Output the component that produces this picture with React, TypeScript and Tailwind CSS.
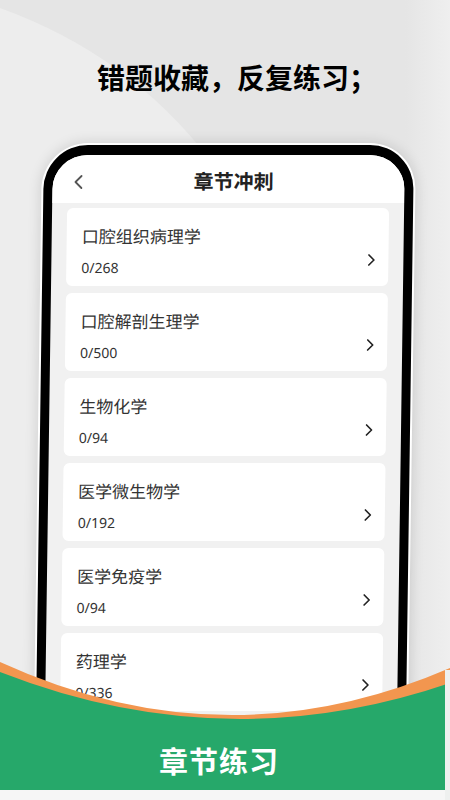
import { ChevronLeft, ChevronRight } from "lucide-react";

const chapters = [
  { name: "口腔组织病理学", done: 0, total: 268 },
  { name: "口腔解剖生理学", done: 0, total: 500 },
  { name: "生物化学", done: 0, total: 94 },
  { name: "医学微生物学", done: 0, total: 192 },
  { name: "医学免疫学", done: 0, total: 94 },
  { name: "药理学", done: 0, total: 336 },
  { name: "病理学", done: 0, total: 410 },
];

function Backdrop() {
  return (
    <svg className="absolute inset-0" width="450" height="800" viewBox="0 0 450 800">
      <defs>
        <linearGradient id="rightEdge" x1="0" x2="1" y1="0" y2="0">
          <stop offset="0" stopColor="#e5e5e5" />
          <stop offset="1" stopColor="#efefef" />
        </linearGradient>
      </defs>
      <rect width="450" height="800" fill="#e5e5e5" />
      <path d="M0 8 Q130 55 210 160 L210 800 L0 800 Z" fill="#ededed" />
      <rect x="405" y="0" width="45" height="800" fill="url(#rightEdge)" />
    </svg>
  );
}

function Banner() {
  return (
    <div className="absolute left-0 top-[650px] w-[450px] h-[150px] flex flex-col items-center">
      <svg className="absolute inset-0" width="450" height="150" viewBox="0 0 450 150">
        <path d="M0 12 Q225 115 450 18 L450 150 L0 150 Z" fill="#f2964f" />
        <path d="M0 22 Q225 110 450 33 L450 150 L0 150 Z" fill="#26a86a" />
        <rect x="0" y="140" width="450" height="10" fill="#f6f6f6" />
        <rect x="445" y="20" width="5" height="130" fill="#eef0ef" />
      </svg>
      <div className="relative mt-[95px] pr-[12px] text-[29px] leading-[34px] font-bold text-white tracking-[1px]">
        章节练习
      </div>
    </div>
  );
}

export default function App() {
  return (
    <div
      className="relative w-[450px] h-[800px] overflow-hidden"
      style={{ fontFamily: '"Noto Sans", "Noto Sans CJK SC", sans-serif' }}
    >
      <Backdrop />
      <div className="relative flex flex-col">
        <h1 className="mt-[60px] pl-[24px] text-center text-[28px] leading-[36px] font-bold text-black">
          错题收藏，反复练习；
        </h1>

        <div className="mt-[47px] ml-[37px] w-[374px] h-[720px] rounded-[46px] bg-white p-[2px] shadow-[0_0_14px_rgba(0,0,0,0.14)] skew-x-[-0.8deg]">
          <div className="h-full rounded-[44px] border-[9px] border-t-[10px] border-black bg-[#f1f1f1] overflow-hidden">
            <div className="h-[48px] pt-[6px] bg-white flex items-center px-[14px]">
              <ChevronLeft size={24} strokeWidth={1.8} className="text-[#555]" />
              <div className="flex-1 pl-[10px] text-center text-[20px] font-bold text-[#222]">章节冲刺</div>
              <div className="w-[24px]" />
            </div>

            <div className="px-[15px] pt-[5px] flex flex-col gap-[7px]">
              {chapters.map((c) => (
                <div key={c.name} className="h-[78px] rounded-[6px] bg-white flex items-center pl-[15px] pr-[7px]">
                  <div className="flex-1 flex flex-col self-start pt-[17px]">
                    <div className="text-[17px] leading-[24px] text-[#333]">{c.name}</div>
                    <div className="mt-[9px] text-[14px] leading-[20px] text-[#333]">
                      {c.done}/{c.total}
                    </div>
                  </div>
                  <ChevronRight size={20} strokeWidth={2} className="mt-[26px] text-[#222]" />
                </div>
              ))}
            </div>
          </div>
        </div>
      </div>
      <Banner />
    </div>
  );
}
